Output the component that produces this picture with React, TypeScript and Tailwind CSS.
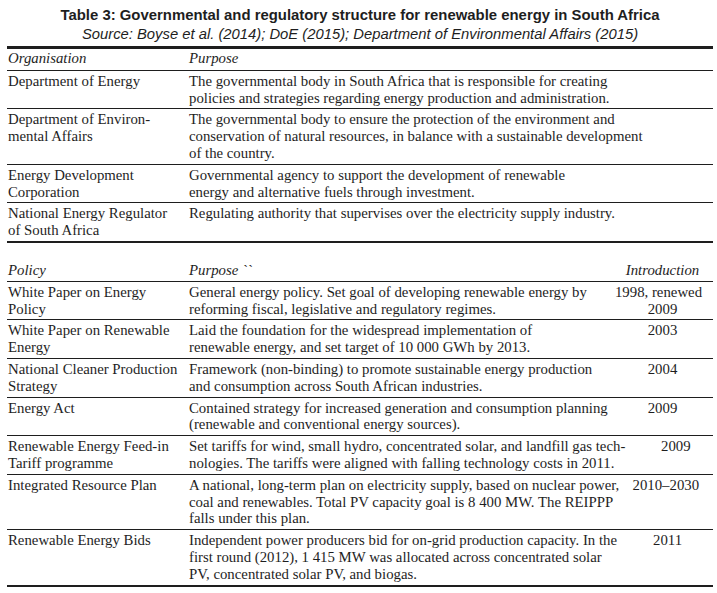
import React from "react";

const serif = { fontFamily: '"Liberation Serif", serif' };
const sans = { fontFamily: '"Liberation Sans", Arial, sans-serif' };

type Row1 = { org: React.ReactNode; purpose: React.ReactNode };
type Row2 = { policy: React.ReactNode; purpose: React.ReactNode; intro: React.ReactNode };

const rows1: Row1[] = [
  {
    org: "Department of Energy",
    purpose: (
      <>
        The governmental body in South Africa that is responsible for creating
        <br />
        policies and strategies regarding energy production and administration.
      </>
    ),
  },
  {
    org: (
      <>
        Department of Environ-
        <br />
        mental Affairs
      </>
    ),
    purpose: (
      <>
        The governmental body to ensure the protection of the environment and
        <br />
        conservation of natural resources, in balance with a sustainable development
        <br />
        of the country.
      </>
    ),
  },
  {
    org: (
      <>
        Energy Development
        <br />
        Corporation
      </>
    ),
    purpose: (
      <>
        Governmental agency to support the development of renewable
        <br />
        energy and alternative fuels through investment.
      </>
    ),
  },
  {
    org: (
      <>
        National Energy Regulator
        <br />
        of South Africa
      </>
    ),
    purpose: <>Regulating authority that supervises over the electricity supply industry.</>,
  },
];

const rows2: Row2[] = [
  {
    policy: (
      <>
        White Paper on Energy
        <br />
        Policy
      </>
    ),
    purpose: (
      <>
        General energy policy. Set goal of developing renewable energy by
        <br />
        reforming fiscal, legislative and regulatory regimes.
      </>
    ),
    intro: (
      <>
        <span className="relative left-[-4px]">1998, renewed</span>
        <br />
        2009
      </>
    ),
  },
  {
    policy: (
      <>
        White Paper on Renewable
        <br />
        Energy
      </>
    ),
    purpose: (
      <>
        Laid the foundation for the widespread implementation of
        <br />
        renewable energy, and set target of 10 000 GWh by 2013.
      </>
    ),
    intro: "2003",
  },
  {
    policy: (
      <>
        National Cleaner Production
        <br />
        Strategy
      </>
    ),
    purpose: (
      <>
        Framework (non-binding) to promote sustainable energy production
        <br />
        and consumption across South African industries.
      </>
    ),
    intro: "2004",
  },
  {
    policy: "Energy Act",
    purpose: (
      <>
        Contained strategy for increased generation and consumption planning
        <br />
        (renewable and conventional energy sources).
      </>
    ),
    intro: "2009",
  },
  {
    policy: (
      <>
        Renewable Energy Feed-in
        <br />
        Tariff programme
      </>
    ),
    purpose: (
      <>
        Set tariffs for wind, small hydro, concentrated solar, and landfill gas tech-
        <br />
        nologies. The tariffs were aligned with falling technology costs in 2011.
      </>
    ),
    intro: "2009",
  },
  {
    policy: "Integrated Resource Plan",
    purpose: (
      <>
        A national, long-term plan on electricity supply, based on nuclear power,
        <br />
        coal and renewables. Total PV capacity goal is 8 400 MW. The REIPPP
        <br />
        falls under this plan.
      </>
    ),
    intro: <span className="relative left-[-4px]">2010–2030</span>,
  },
  {
    policy: "Renewable Energy Bids",
    purpose: (
      <>
        Independent power producers bid for on-grid production capacity. In the
        <br />
        first round (2012), 1 415 MW was allocated across concentrated solar
        <br />
        PV, concentrated solar PV, and biogas.
      </>
    ),
    intro: "2011",
  },
];

export default function App() {
  return (
    <div className="w-[717px] h-[593px] bg-white text-[#1e1e1e] overflow-hidden">
      <div className="ml-[7px] w-[706px] pt-[6px]">
        <div className="text-center text-[14.9px] leading-[19px] font-bold" style={sans}>
          Table 3: Governmental and regulatory structure for renewable energy in South Africa
        </div>
        <div className="text-center text-[14.8px] leading-[19px] italic" style={sans}>
          Source: Boyse et al. (2014); DoE (2015); Department of Environmental Affairs (2015)
        </div>

        <div
          className="mt-[2px] border-t-[3px] border-[#1e1e1e] text-[14.8px] leading-[16.8px] whitespace-nowrap"
          style={serif}
        >
          <div className="grid grid-cols-[182px_1fr] pt-[1px] pb-[3px] italic">
            <div className="pl-[1px]">Organisation</div>
            <div>Purpose</div>
          </div>
          {rows1.map((r, i) => (
            <div key={i} className="grid grid-cols-[182px_1fr] border-t border-[#1e1e1e] pt-[2px] pb-[2px]">
              <div className="pl-[1px]">{r.org}</div>
              <div>{r.purpose}</div>
            </div>
          ))}
          <div className="border-t-[2px] border-[#1e1e1e]" />

          <div className="grid grid-cols-[182px_1fr_101px] pt-[19px] pb-[2px] italic">
            <div className="pl-[1px]">Policy</div>
            <div>Purpose ``</div>
            <div className="text-center">Introduction</div>
          </div>
          {rows2.map((r, i) => (
            <div key={i} className="grid grid-cols-[182px_1fr_101px] border-t border-[#1e1e1e] pt-[2px] pb-[2px]">
              <div className="pl-[1px]">{r.policy}</div>
              <div>{r.purpose}</div>
              <div className="text-center">{r.intro}</div>
            </div>
          ))}
          <div className="border-t-[2px] border-[#1e1e1e]" />
        </div>
      </div>
    </div>
  );
}
